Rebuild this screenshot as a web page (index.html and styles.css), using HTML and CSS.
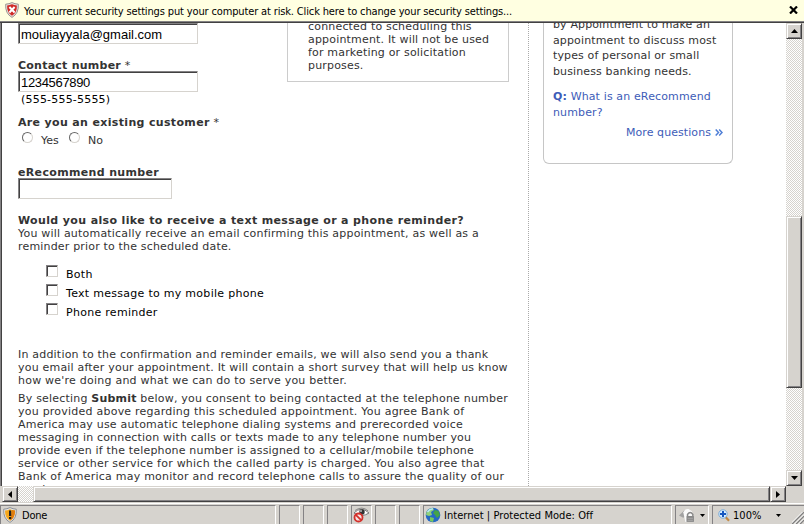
FILE: index.html
```
<!DOCTYPE html>
<html lang="en">
<head>
<meta charset="utf-8">
<title>Schedule an appointment</title>
<link rel="stylesheet" href="styles.css">
</head>
<body>
<div class="window">
  <header class="infobar">
    <svg class="shield" width="14" height="16" viewBox="0 0 14 16"><path d="M7 .6 Q10 2 13.3 2.2 Q14 11.500 7 15.400 Q0 11.500 .7 2.200 Q4 2 7 .6Z" fill="#e8e4e2" stroke="#9a9490"/><path d="M7 2.300 Q9.500 3.400 11.900 3.500 Q12.200 10.700 7 13.700 Q1.800 10.700 2.100 3.500 Q4.500 3.400 7 2.300Z" fill="#cf2a27"/><path d="M4.400 5 L9.600 10.500 M9.600 5 L4.400 10.500" stroke="#fff" stroke-width="2"/></svg>
    <span class="infobar-text">Your current security settings put your computer at risk. Click here to change your security settings...</span>
    <svg class="close" width="9" height="8" viewBox="0 0 9 8"><path d="M1 .5 L8 7.500 M8 .5 L1 7.500" stroke="#000" stroke-width="2.200"/></svg>
  </header>

  <div class="view">
    <main class="page">
      <section class="form">
        <div class="top-row">
          <div class="fields">
            <div class="field email">mouliayyala@gmail.com</div>
            <div class="label contact"><b>Contact number</b> *</div>
            <div class="field phone">1234567890</div>
            <div class="hint">(555-555-5555)</div>
          </div>
          <aside class="note">connected to scheduling this<br>appointment. It will not be used<br>for marketing or solicitation<br>purposes.</aside>
        </div>
        <div class="label existing"><b>Are you an existing customer</b> *</div>
        <div class="radios">
          <i class="radio"></i><span>Yes</span><i class="radio"></i><span>No</span>
        </div>
        <div class="label"><b>eRecommend number</b></div>
        <div class="field short"></div>
        <div class="label reminder"><b>Would you also like to receive a text message or a phone reminder?</b></div>
        <p>You will automatically receive an email confirming this appointment, as well as a<br><span class="tight">reminder prior to the scheduled date.</span></p>
        <ul class="choices">
          <li><i class="box"></i><span>Both</span></li>
          <li><i class="box"></i><span>Text message to my mobile phone</span></li>
          <li><i class="box"></i><span>Phone reminder</span></li>
        </ul>
        <p>In addition to the confirmation and reminder emails, we will also send you a thank<br>you email after your appointment. It will contain a short survey that will help us know<br><span class="loose">how we're doing and what we can do to serve you better.</span></p>
        <p class="consent">By selecting <b>Submit</b> below, you consent to being contacted at the telephone number<br><span class="loose">you provided above regarding this scheduled appointment. You agree Bank of</span><br>America may use automatic telephone dialing systems and prerecorded voice<br><span class="tight">messaging in connection with calls or texts made to any telephone number you<br>provide even if the telephone number is assigned to a cellular/mobile telephone</span><br><span class="loose">service or other service for which the called party is charged. You also agree that<br>Bank of America may monitor and record telephone calls to assure the quality of our</span><br>service.</p>
      </section>
      <aside class="side">
        <div class="faq">
          <p>by Appointment to make an<br>appointment to discuss most<br>types of personal or small<br>business banking needs.</p>
          <p class="question"><b>Q:</b> What is an eRecommend<br>number?</p>
          <p class="more">More questions <svg width="8" height="7" viewBox="0 0 8 7"><path d="M.7 .5 L3.500 3.500 L.7 6.500 M4.200 .5 L7 3.500 L4.200 6.500" fill="none" stroke="#4f7fd6" stroke-width="1.500"/></svg></p>
        </div>
      </aside>
    </main>
    <div class="vbar">
      <div class="btn"><svg width="7" height="4" viewBox="0 0 7 4"><path d="M0 4 L3.500 0 L7 4Z"/></svg></div>
      <div class="thumb"></div>
      <div class="btn end"><svg width="7" height="4" viewBox="0 0 7 4"><path d="M0 0 L3.500 4 L7 0Z"/></svg></div>
    </div>
  </div>

  <div class="hbar">
    <div class="btn"><svg width="4" height="7" viewBox="0 0 4 7"><path d="M4 0 L0 3.500 L4 7Z"/></svg></div>
    <div class="track"></div>
    <div class="thumb"></div>
    <div class="btn"><svg width="4" height="7" viewBox="0 0 4 7"><path d="M0 0 L4 3.500 L0 7Z"/></svg></div>
  </div>

  <footer class="status">
    <div class="pane done">
      <svg width="14" height="16" viewBox="0 0 14 16"><path d="M7 .6 Q10 2 13.300 2.200 Q14 11.500 7 15.400 Q0 11.500 .7 2.200 Q4 2 7 .6Z" fill="#e4e4e4" stroke="#8c9096"/><path d="M7 2.200 Q9.500 3.400 12 3.500 Q12.200 10.700 7 13.800 Q1.800 10.700 2 3.500 Q4.500 3.400 7 2.200Z" fill="#f6a81c"/><path d="M7 13.800 Q12.200 10.700 12 3.500 L9 3 Z" fill="#e07c0c"/><path d="M6 3.500h2.200v5.500H6zM6 10h2.200v2H6z" fill="#222"/></svg>
      <span>Done</span>
    </div>
    <div class="pane"></div>
    <div class="pane"></div>
    <div class="pane"></div>
    <div class="pane eye">
      <svg width="17" height="16" viewBox="0 0 17 16"><path d="M1 6 Q8 -1.500 16 6 Q9 10.500 3 7Z" fill="#fff" stroke="#777"/><path d="M2 3.500 Q9 -1.500 15 3.800" fill="none" stroke="#777" stroke-width=".8"/><circle cx="9" cy="5" r="2.700" fill="#333"/><circle cx="8" cy="4" r="1" fill="#bbb"/><circle cx="5.500" cy="10.500" r="4" fill="#f7e4e2" stroke="#d3302b" stroke-width="1.800"/><path d="M2.800 7.800 L8.200 13.200" stroke="#d3302b" stroke-width="1.800"/></svg>
    </div>
    <div class="pane"></div>
    <div class="pane"></div>
    <div class="pane zone">
      <svg width="16" height="16" viewBox="0 0 16 16"><circle cx="8" cy="8" r="7.300" fill="#2569c4"/><path d="M1.500 5 Q4 1 8 1 L9 3 L6 5 L7 8 L4 9 L1 8Z" fill="#8fd07a"/><path d="M10 3 L13.500 4 L15 8 L12 11 L10 8 L8 6Z" fill="#45a447"/><path d="M5 10 L9 11 L8 15 L5 14Z" fill="#78c95c"/><path d="M2.500 5 Q5 1.500 8 2" fill="none" stroke="#b9e8f5" stroke-width="1.500"/></svg>
      <span>Internet | Protected Mode: Off</span>
    </div>
    <div class="pane lock">
      <svg width="16" height="15" viewBox="0 0 15 14"><path d="M0 7 L5 2 L7 7 L4 9Z" fill="#a2a2a2"/><path d="M4 4 Q6 0 9 1 L12 3 L14 8 L14 13 L6 13Z" fill="#fafafa"/><path d="M8 7.500V6Q10.500 2.500 13 6v1.500" fill="none" stroke="#888" stroke-width="1.400"/><rect x="7" y="7.500" width="7" height="5.500" fill="#858585"/><path d="M8 9.500h5M8 11.500h5" stroke="#aaa"/></svg>
      <svg width="5" height="3" viewBox="0 0 5 3"><path d="M0 0h5L2.500 3Z"/></svg>
    </div>
    <div class="pane zoom">
      <svg width="12" height="13" viewBox="0 0 12 13"><path d="M7.500 8 L11 11.800" stroke="#c28a44" stroke-width="2.200"/><circle cx="5" cy="5" r="4.200" fill="#d9efff" stroke="#78a9d8"/><path d="M5 2v6M2 5h6" stroke="#1557c0" stroke-width="2"/></svg>
      <span>100%</span>
      <svg class="drop" width="5" height="3" viewBox="0 0 5 3"><path d="M0 0h5L2.500 3Z"/></svg>
      <svg class="grip" width="12" height="12" viewBox="0 0 12 12"><path d="M0 12 L12 0 M4 12 L12 4 M8 12 L12 8" stroke="#808080" stroke-width="1.500"/><path d="M-1.500 12 L12 -1.500 M2.500 12 L12 2.500 M6.500 12 L12 6.500" stroke="#fff"/></svg>
    </div>
  </footer>
</div>
</body>
</html>
```
FILE: styles.css
```
* { box-sizing: border-box; }

body {
  margin: 0;
  background: #d6d3ce;
  color: #333;
  font: 11px/13px "DejaVu Sans", sans-serif;
  letter-spacing: 0.2px;
}

p, ul { margin: 0; padding: 0; list-style: none; }
svg { display: block; flex: none; }

.window {
  display: flex;
  flex-direction: column;
  width: 804px;
  height: 524px;
  overflow: hidden;
  white-space: nowrap;
}

/* security bar */
.infobar {
  display: flex;
  align-items: center;
  flex: 0 0 23px;
  padding: 0 6px 2px 5px;
  background: #ffffe1;
  border-bottom: 1px solid #424142;
  box-shadow: inset 0 -1px #848284;
  color: #000;
}
.infobar-text {
  margin-left: 5px;
  padding-top: 2px;
  font-family: "DejaVu Sans Condensed", sans-serif;
  letter-spacing: -0.142px;
}
.close { margin-left: auto; }

/* document area */
.view {
  display: flex;
  flex: 0 0 463px;
  overflow: hidden;
  background: #fff;
  border-left: 1px solid #848284;
}
.page {
  display: flex;
  width: 785px;
  height: 463px;
  border-left: 1px solid #424142;
  overflow: hidden;
}
.form {
  width: 527px;
  height: 463px;
  padding-left: 16px;
  border-right: 1px dotted #aaa;
  overflow: hidden;
}

.top-row { display: flex; align-items: flex-start; height: 92px; }
.fields { width: 269px; }
.note {
  width: 222px;
  height: 59px;
  padding: 0 20px;
  border: 1px solid #ccc;
  border-top: 0;
  letter-spacing: 0.18px;
}
.note::before { content: ""; display: block; margin-top: -3px; }

.field {
  width: 180px;
  height: 21px;
  padding-left: 2px;
  border: 1px solid;
  border-color: #848284 #d6d3ce #d6d3ce #848284;
  box-shadow: inset 1px 1px #424142;
  background: #fff;
  color: #000;
  font: 13px/21px "Liberation Sans", sans-serif;
  letter-spacing: 0;
}
.phone { letter-spacing: -0.33px; }
.short { width: 154px; margin-top: -1px; }
.label { height: 13px; }
.label b { letter-spacing: 0.34px; }
.contact { height: 12px; margin-top: 15px; }
.contact b { letter-spacing: 0.24px; }
.hint { margin-top: 1px; padding-left: 3px; color: #000; }
.existing { margin-top: 1px; }

.radios { display: flex; height: 37px; padding: 3px 0 0 4px; }
.radio {
  width: 11px;
  height: 11px;
  border: 1px solid;
  border-color: #666 #d6d3ce #d6d3ce #666;
  border-radius: 50%;
}
.radios span { width: 28px; padding: 2px 0 0 8px; margin-right: 8px; letter-spacing: 0; }

.reminder { margin-top: 15px; }
.reminder b { letter-spacing: 0.364px; }
.tight { letter-spacing: 0.175px; }
.loose { letter-spacing: 0.23px; }

.choices { margin: 12px 0 26px 28px; color: #000; letter-spacing: 0.285px; }
.choices li { display: flex; height: 19px; }
.choices span { padding: 3px 0 0 8px; }
.box {
  width: 12px;
  height: 12px;
  border: 1px solid;
  border-color: #848284 #d6d3ce #d6d3ce #848284;
  box-shadow: inset 1px 1px #424142;
}
.consent { margin-top: 5px; }

/* side panel */
.side { padding-left: 14px; }
.faq {
  display: flow-root;
  width: 190px;
  height: 141px;
  padding: 0 9px;
  border: 1px solid #c6c6c6;
  border-top: 0;
  border-radius: 0 0 6px 6px;
  line-height: 15.500px;
  letter-spacing: 0.13px;
}
.faq p:first-child { margin-top: -6px; }
.question, .more { color: #3d5cb8; }
.question { margin-top: 10px; }
.more {
  display: flex;
  align-items: center;
  justify-content: flex-end;
  gap: 4px;
  margin-top: 5px;
  letter-spacing: 0.07px;
}

/* scroll bars */
.vbar, .track {
  background: repeating-conic-gradient(#d6d3ce 0 25%, #fff 0 50%) 0 0 / 2px 2px;
}
.vbar { display: flex; flex-direction: column; width: 16px; height: 463px; }
.view::after { content: ""; width: 2px; height: 463px; background: #d6d3ce; }
.btn, .thumb {
  background: #d6d3ce;
  border: 1px solid;
  border-color: #d6d3ce #424142 #424142 #d6d3ce;
  box-shadow: inset 1px 1px #fff, inset -1px -1px #848284;
}
.btn { display: flex; align-items: center; justify-content: center; flex: 0 0 16px; }
.vbar .thumb { height: 172px; margin-top: 177px; }
.end { margin-top: auto; }
.hbar { display: flex; flex: 0 0 16px; padding: 0 18px 0 2px; }
.track { width: 15px; }
.hbar .thumb { flex: 1; }

/* status bar */
.status {
  display: flex;
  gap: 3px;
  flex: 0 0 22px;
  padding-top: 3px;
  box-shadow: inset 0 1px #d6d3ce, inset 0 2px #fff;
  color: #000;
  font-family: "DejaVu Sans Condensed", sans-serif;
  letter-spacing: 0.05px;
}
.pane {
  display: flex;
  align-items: center;
  width: 21px;
  height: 19px;
  border: 1px solid;
  border-color: #848284 #fff #d6d3ce #848284;
  border-bottom: 0;
}
.done { width: 276px; padding-left: 2px; gap: 5px; letter-spacing: -0.2px; }
.eye { padding-left: 1px; }
.zone { width: 249px; padding-left: 1px; gap: 3px; }
.lock { width: 34px; padding-left: 3px; gap: 5px; }
.zoom { width: 92px; padding-left: 5px; gap: 3px; border-right: 0; }
.drop { margin-left: 11px; }
.grip { margin-left: auto; align-self: flex-end; }
```
